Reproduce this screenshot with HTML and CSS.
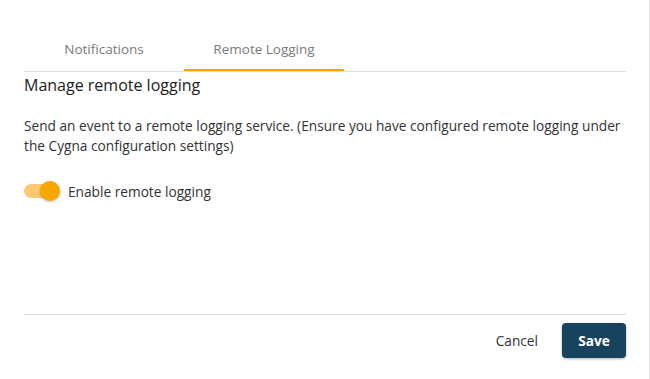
FILE: index.html
```html
<!DOCTYPE html>
<html>
<head>
<meta charset="utf-8">
<link rel="stylesheet" href="styles.css">
</head>
<body>
<div class="dialog">
  <div class="tabs">
    <div class="tab">Notifications</div>
    <div class="tab active">Remote Logging</div>
  </div>
  <div class="content">
    <h2 class="title">Manage remote logging</h2>
    <p class="desc">Send an event to a remote logging service. (Ensure you have configured remote logging under the Cygna configuration settings)</p>
    <label class="toggle-row">
      <span class="toggle"><span class="track"></span><span class="thumb"></span></span>
      <span class="toggle-label">Enable remote logging</span>
    </label>
  </div>
  <div class="footer">
    <button class="btn-cancel">Cancel</button>
    <button class="btn-save">Save</button>
  </div>
</div>
</body>
</html>
```
FILE: styles.css
```css
html, body {
  margin: 0;
  padding: 0;
  background: #ffffff;
}
body {
  font-family: "Open Sans", "Noto Sans", sans-serif;
  color: #333333;
  width: 650px;
  height: 379px;
  overflow: hidden;
}
.dialog {
  box-sizing: border-box;
  width: 650px;
  height: 379px;
  padding: 0 24px;
  display: flex;
  flex-direction: column;
  box-shadow: inset -1px 0 0 #e4e4e4;
}
.tabs {
  display: flex;
  margin-top: 31px;
  border-bottom: 1px solid #dddddd;
}
.tab {
  width: 160px;
  text-align: center;
  font-size: 13.5px;
  color: #7a7a7a;
  height: 40px;
  line-height: 36px;
  box-sizing: border-box;
}
.tab.active {
  border-bottom: 2px solid #f5a800;
  margin-bottom: -1px;
}
.content {
  flex: 1;
}
.title {
  margin: 2px 0 0;
  font-size: 16px;
  font-weight: 400;
  color: #222222;
  line-height: 22px;
}
.desc {
  margin: 20px 0 0;
  font-size: 13.7px;
  line-height: 20px;
  color: #333333;
}
.toggle-row {
  display: flex;
  align-items: center;
  margin-top: 25px;
  gap: 8px;
}
.toggle {
  position: relative;
  width: 36px;
  height: 20px;
  display: inline-block;
}
.track {
  position: absolute;
  left: 0;
  top: 3px;
  width: 34px;
  height: 14px;
  border-radius: 7px;
  background: #fdc970;
}
.thumb {
  position: absolute;
  left: 16px;
  top: 0;
  width: 20px;
  height: 20px;
  border-radius: 50%;
  background: #f8a700;
  box-shadow: 0 1px 3px rgba(0,0,0,0.25);
}
.toggle-label {
  font-size: 13.7px;
  color: #333333;
}
.footer {
  border-top: 1px solid #dddddd;
  display: flex;
  justify-content: flex-end;
  gap: 8px;
  padding-top: 8px;
  height: 56px;
  box-sizing: border-box;
  align-items: flex-start;
  margin-bottom: 9px;
}
.btn-cancel {
  font-family: inherit;
  font-size: 13.7px;
  color: #333333;
  background: none;
  border: none;
  height: 35px;
  padding: 0 16px;
  cursor: pointer;
}
.btn-save {
  font-family: inherit;
  font-size: 13.7px;
  font-weight: 700;
  color: #ffffff;
  background: #17435f;
  border: none;
  border-radius: 4px;
  height: 35px;
  width: 64px;
  box-shadow: 0 1px 3px rgba(0,0,0,0.3);
  cursor: pointer;
}
```
